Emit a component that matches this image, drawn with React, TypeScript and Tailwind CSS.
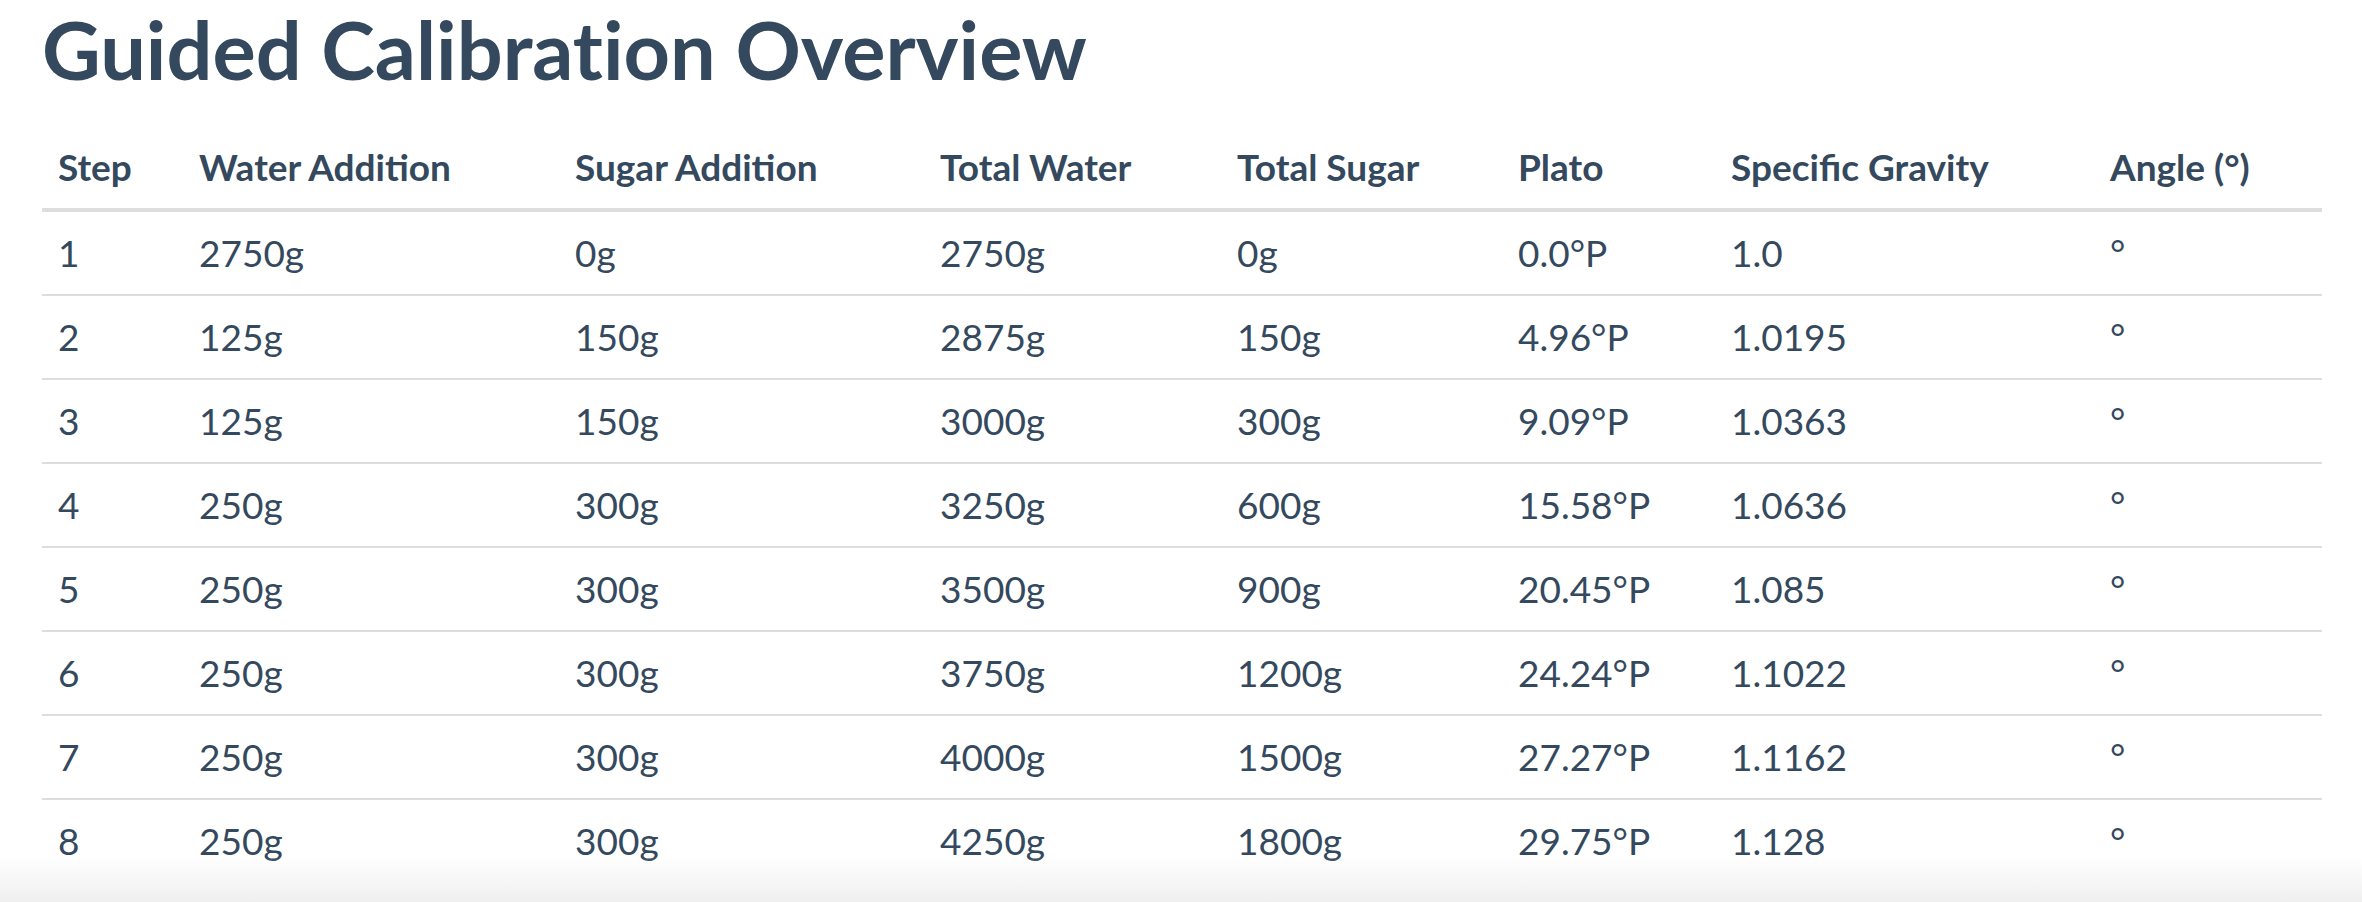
import React from "react";

const rows = [
  ["1", "2750g", "0g", "2750g", "0g", "0.0°P", "1.0", "°"],
  ["2", "125g", "150g", "2875g", "150g", "4.96°P", "1.0195", "°"],
  ["3", "125g", "150g", "3000g", "300g", "9.09°P", "1.0363", "°"],
  ["4", "250g", "300g", "3250g", "600g", "15.58°P", "1.0636", "°"],
  ["5", "250g", "300g", "3500g", "900g", "20.45°P", "1.085", "°"],
  ["6", "250g", "300g", "3750g", "1200g", "24.24°P", "1.1022", "°"],
  ["7", "250g", "300g", "4000g", "1500g", "27.27°P", "1.1162", "°"],
  ["8", "250g", "300g", "4250g", "1800g", "29.75°P", "1.128", "°"],
];

const headers = [
  "Step",
  "Water Addition",
  "Sugar Addition",
  "Total Water",
  "Total Sugar",
  "Plato",
  "Specific Gravity",
  "Angle (°)",
];

const widths = [
  "w-[141px]",
  "w-[376px]",
  "w-[365px]",
  "w-[297px]",
  "w-[281px]",
  "w-[213px]",
  "w-[379px]",
  "w-[228px]",
];

export default function App() {
  return (
    <div
      className="relative min-h-[902px] bg-white px-[42px] text-[#34495e] overflow-hidden"
      style={{ fontFamily: "Lato, 'Open Sans', sans-serif" }}
    >
      <h1 className="pt-[5px] text-[81px] leading-[88px] font-bold [font-variant-ligatures:no-common-ligatures]">
        Guided Calibration Overview
      </h1>
      <table className="mt-[33px] w-[2280px] table-fixed border-separate border-spacing-0 text-[37px] leading-[50px]">
        <colgroup>
          {widths.map((w, i) => (
            <col key={i} className={w} />
          ))}
        </colgroup>
        <thead>
          <tr>
            {headers.map((h) => (
              <th
                key={h}
                className="border-b-4 border-[#dddddd] px-4 py-4 text-left align-middle font-bold"
              >
                {h}
              </th>
            ))}
          </tr>
        </thead>
        <tbody>
          {rows.map((r, ri) => (
            <tr key={r[0]}>
              {r.map((c, i) => (
                <td
                  key={i}
                  className={
                    ri === 0
                      ? "px-4 py-4 align-middle font-normal"
                      : "border-t-2 border-[#dddddd] px-4 py-4 align-middle font-normal"
                  }
                >
                  {c}
                </td>
              ))}
            </tr>
          ))}
        </tbody>
      </table>
      <div className="pointer-events-none absolute bottom-0 left-0 right-0 h-[45px] bg-gradient-to-b from-white/0 to-[#efefef]" />
    </div>
  );
}
